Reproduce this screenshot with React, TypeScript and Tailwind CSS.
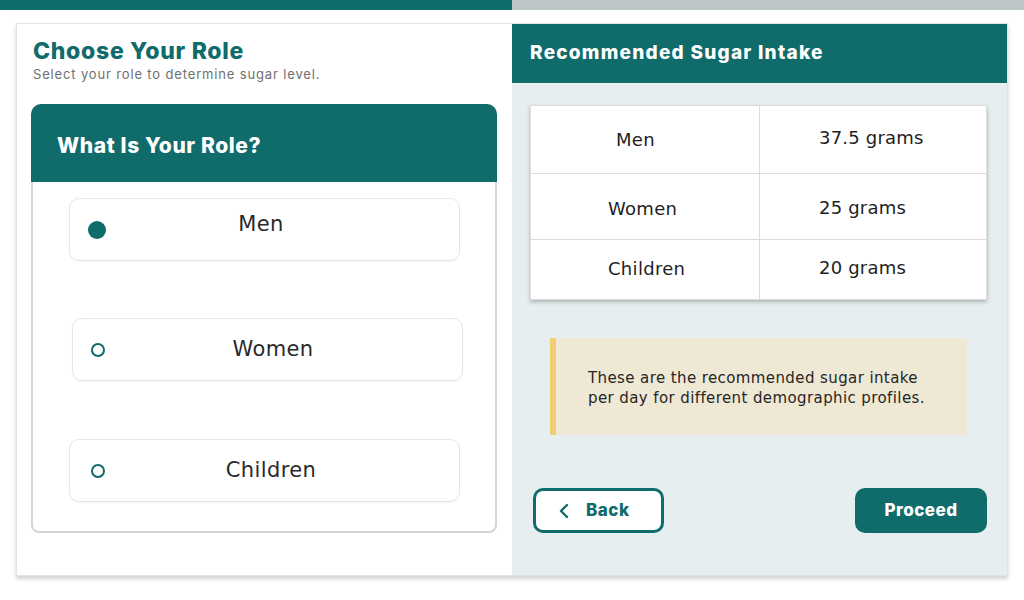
import { useState } from "react";

const heading = "font-['Inter',sans-serif]";
const body = "font-['DejaVu_Sans',sans-serif]";

type Role = {
  label: string;
  box: string;
  text: string;
};

const roles: Role[] = [
  { label: "Men", box: "mt-[16px] ml-[36px] pl-[18px] pr-[43px]", text: "pb-[9px]" },
  { label: "Women", box: "mt-[57px] ml-[39px] pl-[18px] pr-[21px]", text: "" },
  { label: "Children", box: "mt-[58px] ml-[36px] pl-[21px] pr-[22px]", text: "" },
];

const intake = [
  { who: "Men", amount: "37.5 grams", row: "h-[67px]", whoPad: "pl-[85px]", lift: "pb-[0px]", liftR: "pb-[4px]" },
  { who: "Women", amount: "25 grams", row: "h-[66px]", whoPad: "pl-[77px]", lift: "pt-[4px]", liftR: "pt-[2px]" },
  { who: "Children", amount: "20 grams", row: "h-[60px]", whoPad: "pl-[77px]", lift: "pb-[2px]", liftR: "pb-[4px]" },
];

export default function App() {
  const [selected, setSelected] = useState("Men");

  return (
    <div className="w-[1024px] h-[600px] bg-white overflow-hidden">
      <div className="flex h-[10px]">
        <div className="w-[512px] bg-[#106b6b]" />
        <div className="flex-1 bg-[#bec7c7]" />
      </div>

      <div className="ml-[16px] mt-[13px] w-[992px] h-[553px] flex border border-[#e2e4e4] shadow-[0_3px_4px_rgba(0,0,0,0.18)]">
        {/* left side */}
        <section className="w-[495px] flex flex-col bg-white">
          <div className="pl-[16px] pt-[12px]">
            <h1 className={`${heading} text-[23px] leading-[30px] font-extrabold text-[#106b6b] tracking-[0.7px]`}>
              Choose Your Role
            </h1>
            <p className={`${heading} text-[13px] leading-[16px] text-[#6f6f6f] tracking-[0.85px]`}>
              Select your role to determine sugar level.
            </p>
          </div>

          <div className="ml-[14px] mt-[22px] w-[466px] h-[429px] flex flex-col">
            <div className="h-[78px] bg-[#106b6b] rounded-t-[10px] flex items-center pl-[26px] pt-[5px]">
              <h2 className={`${heading} text-white text-[21px] font-extrabold tracking-[0.6px]`}>What Is Your Role?</h2>
            </div>
            <div className="flex-1 border-2 border-t-0 border-[#d6d6d6] rounded-b-[8px] flex flex-col">
              {roles.map((r) => {
                const active = selected === r.label;
                return (
                  <button
                    key={r.label}
                    type="button"
                    onClick={() => setSelected(r.label)}
                    className={`${r.box} w-[391px] h-[63px] flex items-center bg-white border border-[#e6e6e6] rounded-[10px] shadow-[0_1px_2px_rgba(0,0,0,0.04)]`}
                  >
                    {active ? (
                      <span className="w-[18px] h-[18px] rounded-full bg-[#106b6b]" />
                    ) : (
                      <span className="w-[14px] h-[14px] rounded-full border-2 border-[#106b6b]" />
                    )}
                    <span className={`${body} ${r.text} flex-1 text-center text-[21px] tracking-[0.4px] text-[#2a2a2a]`}>
                      {r.label}
                    </span>
                  </button>
                );
              })}
            </div>
          </div>
        </section>

        {/* right side */}
        <section className="flex-1 bg-[#e6eef0] flex flex-col">
          <div className="h-[59px] bg-[#106b6b] flex items-center pl-[18px]">
            <h2 className={`${heading} text-white text-[19px] font-extrabold tracking-[1.25px]`}>Recommended Sugar Intake</h2>
          </div>

          <div className="ml-[18px] mt-[22px] w-[457px] bg-white border border-[#dcdcdc] shadow-[0_2px_4px_rgba(0,0,0,0.25)]">
            {intake.map((row, i) => (
              <div
                key={row.who}
                className={`${row.row} flex ${i > 0 ? "border-t border-[#dcdcdc]" : ""}`}
              >
                <div className={`${body} ${row.whoPad} ${row.lift} w-[229px] flex items-center text-[18px] tracking-[0.3px] text-[#1e1e1e] border-r border-[#dcdcdc]`}>
                  {row.who}
                </div>
                <div className={`${body} ${row.liftR} flex-1 flex items-center pl-[59px] text-[18px] tracking-[0.2px] text-[#1e1e1e]`}>
                  {row.amount}
                </div>
              </div>
            ))}
          </div>

          <div className="ml-[38px] mt-[38px] w-[417px] h-[97px] flex bg-[#efe8d5]">
            <div className="w-[6px] bg-[#f0cf72]" />
            <p className={`${body} pl-[32px] pt-[30px] text-[15px] leading-[20px] tracking-[0.4px] text-[#262626]`}>
              These are the recommended sugar intake
              <br />
              per day for different demographic profiles.
            </p>
          </div>

          <div className="mt-[53px] ml-[21px] mr-[20px] flex justify-between">
            <button
              type="button"
              className={`${heading} w-[131px] h-[45px] bg-white border-[3px] border-[#106b6b] rounded-[10px] flex items-center pl-[23px] gap-[17px] text-[#106b6b] text-[17px] font-extrabold tracking-[0.5px]`}
            >
              <svg width="10" height="16" viewBox="0 0 10 16" fill="none">
                <path d="M8 2 L2 8 L8 14" stroke="#106b6b" strokeWidth="2.4" strokeLinecap="round" strokeLinejoin="round" />
              </svg>
              Back
            </button>
            <button
              type="button"
              className={`${heading} w-[132px] h-[45px] bg-[#106b6b] rounded-[10px] text-white text-[17px] font-extrabold tracking-[0.5px]`}
            >
              Proceed
            </button>
          </div>
        </section>
      </div>
    </div>
  );
}
